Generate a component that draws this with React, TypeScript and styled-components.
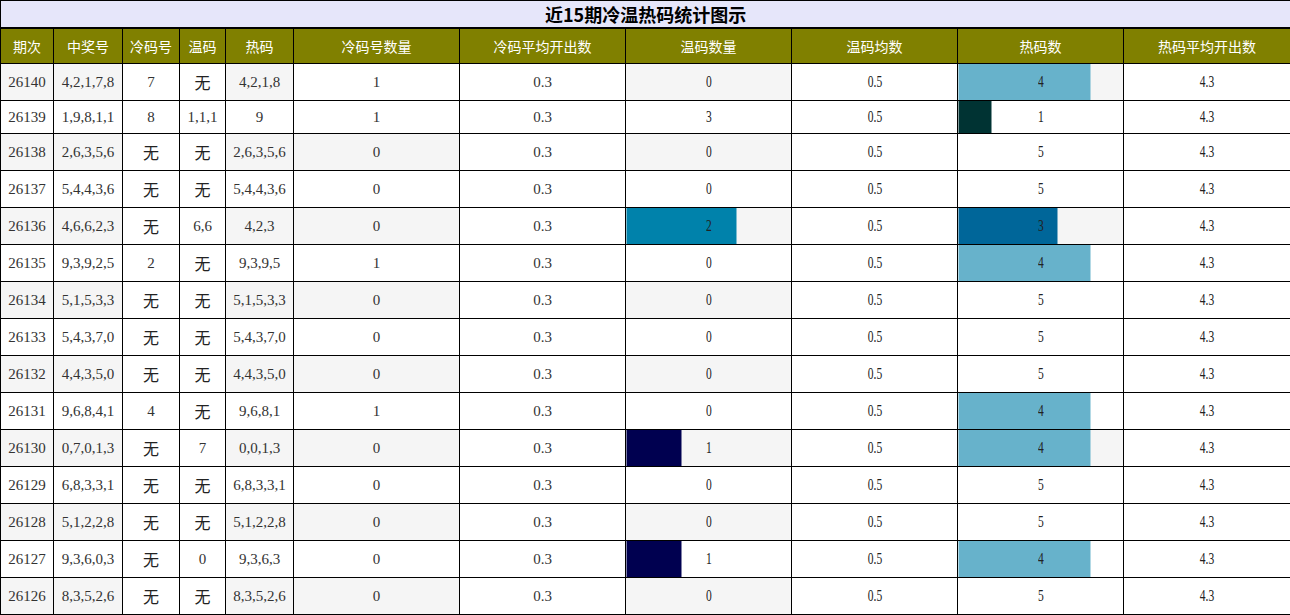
import React from "react";
import styled, { createGlobalStyle } from "styled-components";

const Global = createGlobalStyle`
  html, body { margin: 0; padding: 0; background: #fff; }
  #root { width: 1290px; }
`;

const Table = styled.table`
  width: 1290px;
  border-collapse: collapse;
  table-layout: fixed;
  border: 1px solid #000;
  font-family: "Liberation Serif", "Noto Sans CJK SC", serif;
  color: #333;
`;

const TitleCell = styled.th`
  background: #e6e6fa;
  color: #000;
  border: 1px solid #000;
  border-bottom-width: 2px;
  padding: 0;
  height: 26px;
  line-height: 26px;
  font-family: "Noto Sans CJK SC", sans-serif;
  font-size: 18px;
  font-weight: bold;
  text-align: center;
`;

const HeadCell = styled.th`
  background: #808000;
  color: #fff;
  border: 1px solid #000;
  padding: 7px 0;
  line-height: 20px;
  font-family: "Noto Sans CJK SC", sans-serif;
  font-size: 14px;
  font-weight: normal;
  text-align: center;
  white-space: nowrap;
`;

const Cell = styled.td<{ $grey?: boolean }>`
  border: 1px solid #000;
  padding: 7px 0;
  line-height: 18px;
  font-size: 15px;
  text-align: center;
  white-space: nowrap;
  background: ${(p) => (p.$grey ? "#f5f5f5" : "#fff")};
`;

const BarCell = styled(Cell)<{ $color: string; $pct: number; $rest: string }>`
  background: linear-gradient(
    to right,
    ${(p) => p.$color} 0,
    ${(p) => p.$color} ${(p) => p.$pct}%,
    ${(p) => p.$rest} ${(p) => p.$pct}%,
    ${(p) => p.$rest} 100%
  );
`;

const None = styled.span`
  display: inline-block;
  font-family: "Noto Sans CJK SC", sans-serif;
  font-size: 16px;
  line-height: 22px;
  vertical-align: middle;
  color: #222;
`;

const Narrow = styled.span`
  display: inline-block;
  font-size: 16px;
  line-height: 18px;
  transform: scaleX(0.72);
  color: #222;
`;

type Row = [number, string, string, string, string, number, string, number, string, number, string];

const rows: Row[] = [
  [26140, "4,2,1,7,8", "7", "无", "4,2,1,8", 1, "0.3", 0, "0.5", 4, "4.3"],
  [26139, "1,9,8,1,1", "8", "1,1,1", "9", 1, "0.3", 3, "0.5", 1, "4.3"],
  [26138, "2,6,3,5,6", "无", "无", "2,6,3,5,6", 0, "0.3", 0, "0.5", 5, "4.3"],
  [26137, "5,4,4,3,6", "无", "无", "5,4,4,3,6", 0, "0.3", 0, "0.5", 5, "4.3"],
  [26136, "4,6,6,2,3", "无", "6,6", "4,2,3", 0, "0.3", 2, "0.5", 3, "4.3"],
  [26135, "9,3,9,2,5", "2", "无", "9,3,9,5", 1, "0.3", 0, "0.5", 4, "4.3"],
  [26134, "5,1,5,3,3", "无", "无", "5,1,5,3,3", 0, "0.3", 0, "0.5", 5, "4.3"],
  [26133, "5,4,3,7,0", "无", "无", "5,4,3,7,0", 0, "0.3", 0, "0.5", 5, "4.3"],
  [26132, "4,4,3,5,0", "无", "无", "4,4,3,5,0", 0, "0.3", 0, "0.5", 5, "4.3"],
  [26131, "9,6,8,4,1", "4", "无", "9,6,8,1", 1, "0.3", 0, "0.5", 4, "4.3"],
  [26130, "0,7,0,1,3", "无", "7", "0,0,1,3", 0, "0.3", 1, "0.5", 4, "4.3"],
  [26129, "6,8,3,3,1", "无", "无", "6,8,3,3,1", 0, "0.3", 0, "0.5", 5, "4.3"],
  [26128, "5,1,2,2,8", "无", "无", "5,1,2,2,8", 0, "0.3", 0, "0.5", 5, "4.3"],
  [26127, "9,3,6,0,3", "无", "0", "9,3,6,3", 0, "0.3", 1, "0.5", 4, "4.3"],
  [26126, "8,3,5,2,6", "无", "无", "8,3,5,2,6", 0, "0.3", 0, "0.5", 5, "4.3"],
];

const headers = ["期次", "中奖号", "冷码号", "温码", "热码", "冷码号数量", "冷码平均开出数", "温码数量", "温码均数", "热码数", "热码平均开出数"];
const widths = [53, 69, 57, 46, 68, 166, 166, 166, 166, 166, 167];

const warmColors: Record<number, string> = { 1: "#000050", 2: "#0082ab", 3: "#ffffff" };
const hotColors: Record<number, string> = { 1: "#003333", 2: "#004d66", 3: "#006699", 4: "#67b2cb", 5: "#ffffff" };

const txt = (s: string) => (s === "无" ? <None>无</None> : s);

function Bar({ value, max, colors, rest }: { value: number; max: number; colors: Record<number, string>; rest: string }) {
  if (value === 0) {
    return (
      <Cell $grey={rest !== "#fff"}>
        <Narrow>{value}</Narrow>
      </Cell>
    );
  }
  return (
    <BarCell $color={colors[value]} $pct={(value / max) * 100} $rest={rest}>
      <Narrow>{value}</Narrow>
    </BarCell>
  );
}

export default function App() {
  return (
    <>
      <Global />
      <Table>
        <colgroup>
          {widths.map((w, i) => (
            <col key={i} style={{ width: w }} />
          ))}
        </colgroup>
        <thead>
          <tr>
            <TitleCell colSpan={11}>近15期冷温热码统计图示</TitleCell>
          </tr>
          <tr>
            {headers.map((h) => (
              <HeadCell key={h}>{h}</HeadCell>
            ))}
          </tr>
        </thead>
        <tbody>
          {rows.map((r, i) => {
            const g = i % 2 === 0;
            const rest = g ? "#f5f5f5" : "#fff";
            return (
              <tr key={r[0]}>
                <Cell $grey={g}>{r[0]}</Cell>
                <Cell $grey={g}>{r[1]}</Cell>
                <Cell>{txt(r[2])}</Cell>
                <Cell>{txt(r[3])}</Cell>
                <Cell $grey={g}>{r[4]}</Cell>
                <Cell $grey={g && r[5] === 0}>{r[5]}</Cell>
                <Cell>{r[6]}</Cell>
                <Bar value={r[7]} max={3} colors={warmColors} rest={rest} />
                <Cell>
                  <Narrow>{r[8]}</Narrow>
                </Cell>
                <Bar value={r[9]} max={5} colors={hotColors} rest={rest} />
                <Cell>
                  <Narrow>{r[10]}</Narrow>
                </Cell>
              </tr>
            );
          })}
        </tbody>
      </Table>
    </>
  );
}
